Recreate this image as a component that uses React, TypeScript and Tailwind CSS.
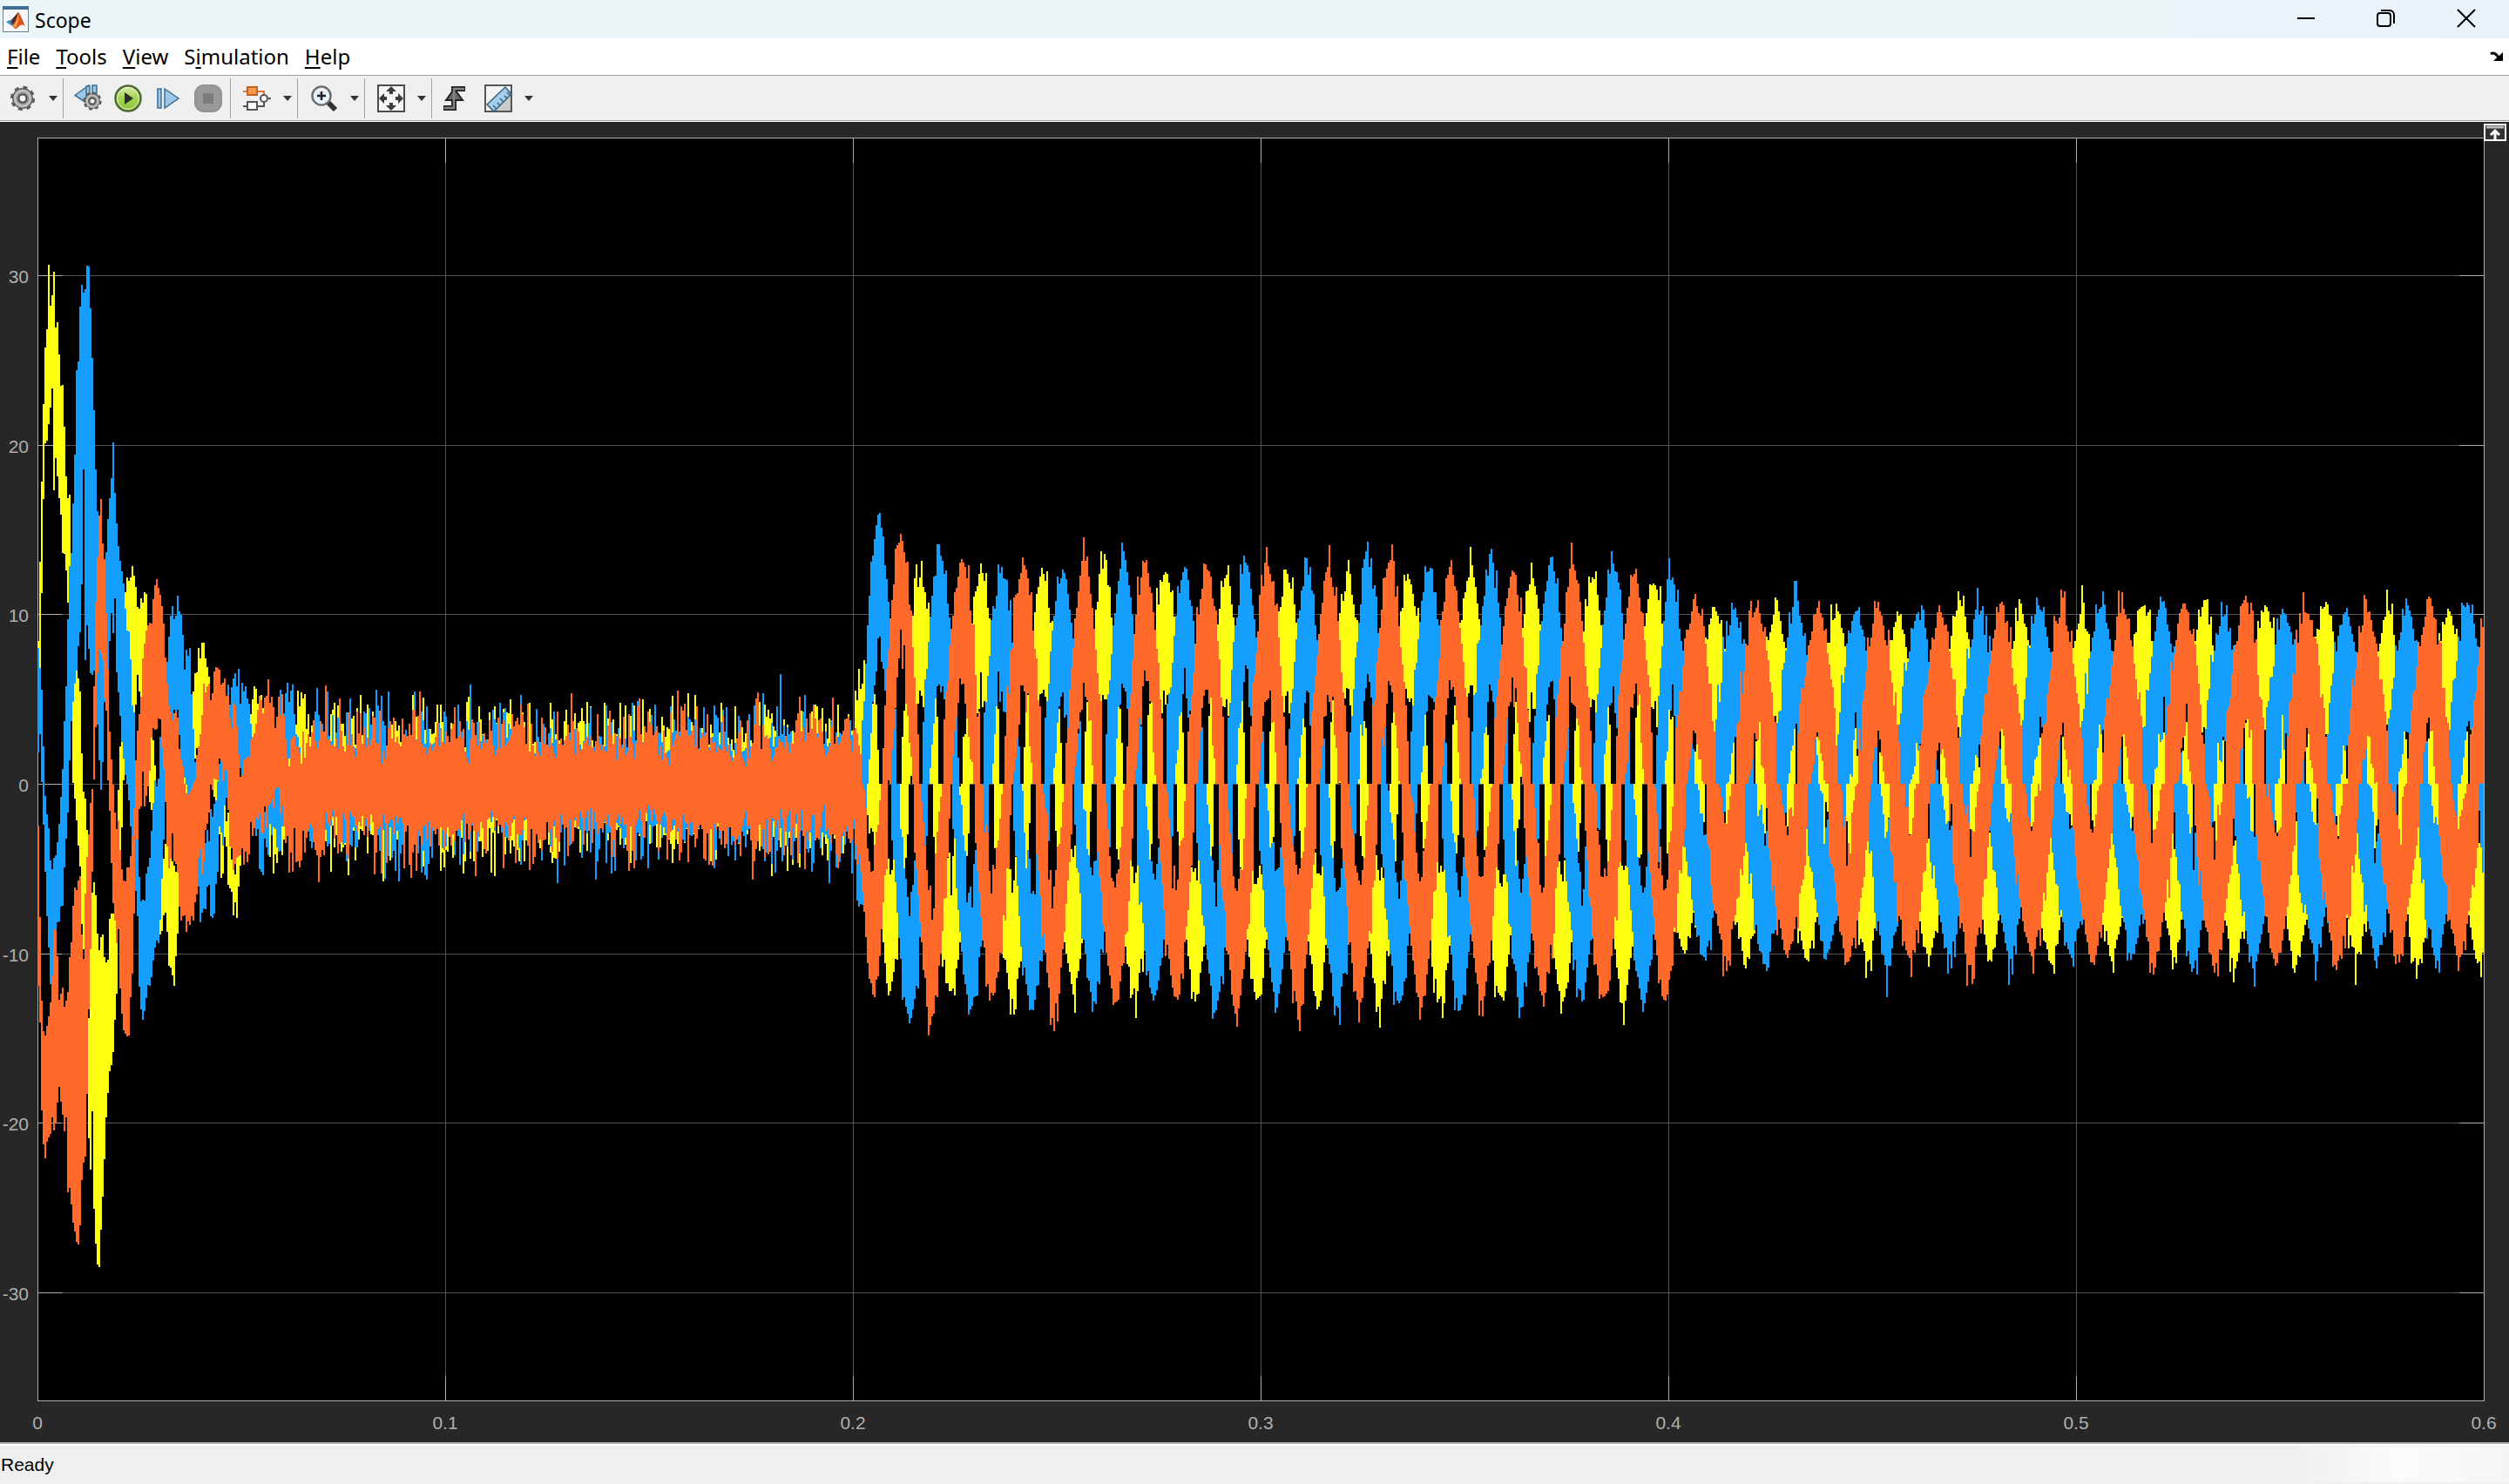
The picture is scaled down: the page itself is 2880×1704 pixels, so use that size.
import type { ReactNode } from 'react';

type Key = [x: number, lo: number, hi: number];

type Trace = {
  name: string;
  color: string;
  seed: number;
  peak: number;
  amp: number;
  boost: number;
  rise: number;
  startup: Key[];
};

// Plot geometry, in viewBox units
const VIEW_W = 2880;
const VIEW_H = 1516;
const LEFT = 43;
const RIGHT = 2851;
const TOP = 19;
const BOTTOM = 1468;
const ZERO = 760;
const UNIT = 19.47;
const PERIOD = 70.15;
const STEP = 2;

const X_TICKS = [0, 0.1, 0.2, 0.3, 0.4, 0.5, 0.6];
const Y_TICKS = [30, 20, 10, 0, -10, -20, -30];

// Envelope of each phase current while the machine starts up
const TRACES: Trace[] = [
  {
    name: 'Phase A',
    color: '#ffff12',
    seed: 11,
    peak: 1197,
    amp: 8.7,
    boost: 0,
    rise: 40,
    startup: [
      [43, 5, 6], [46, 6, 13], [49, 14, 20], [51, 20, 25], [54, 20, 27], [56, 21, 30.2], [57, 22, 28],
      [60, 23, 28.5], [62, 17, 30.2], [64, 19, 27.3], [67, 17.5, 26.5], [69, 17, 23.7], [72, 13.5, 23.4],
      [75, 13, 19.4], [77, 12, 17], [80, 7, 17], [82, 3.7, 12], [84, 0, 10], [87, -2, 8], [92, -5, 5.7],
      [95, -10, 0], [97, -10, 0], [100, -14, -3], [102, -21, -14], [105, -23, -6], [108, -25, -6],
      [110, -27, -7], [113, -29.3, -9.5], [115, -27, -9.5], [118, -24, -8.5], [121, -21, -10.5],
      [123, -18.5, -11], [127, -16.5, -7.5], [130, -15.5, -8], [133, -13, -8], [135, -11, -3],
      [137, -4, 1.5], [139, -3.5, 3], [141, -1, 2], [144, 3, 11.5], [147, 5, 12.3], [150, 5, 12],
      [153, 4, 13], [155, 3.5, 12.3], [158, 6, 10.5], [162, 4.5, 11], [165, 6, 11], [167, 4, 12],
      [169, 3, 9.5], [172, -1, 7], [175, -1.5, 3], [177, -2.5, 2], [182, -8, -2], [185, -9.5, -5],
      [188, -8, -4], [192, -10.5, -3], [195, -10.5, -3.5], [200, -11.8, -5], [203, -10, -5],
      [205, -7, -2], [208, -1, 1], [213, -2, 1], [218, -0.5, 3], [222, 2, 6], [228, 1.5, 7.5],
      [232, 3, 9], [235, 3, 7.5], [241, 2, 5], [247, -2, 2], [251, -5, 1], [258, -4, -2], [262, -5.5, -1.5],
      [267, -7, -4], [271, -9, -5], [273, -6, -3], [280, -1, 1], [288, 2, 4.5], [295, 2, 5.7],
      [302, 1, 4.5], [310, -4.5, 2], [320, -4.5, 1], [328, -3, 2], [340, 1, 4.5], [348, 1, 4.8], [362, -4, 2.5],
    ],
  },
  {
    name: 'Phase B',
    color: '#149fff',
    seed: 23,
    peak: 1149.5,
    amp: 9.2,
    boost: 4.2,
    rise: 14,
    startup: [
      [43, 2, 9], [47, 1, 5.7], [49, 0, 4.5], [51, -4, 0], [53, -7, -1], [56, -10, -3], [59, -12.3, -5],
      [61, -11, -5.3], [63, -10, -4], [67, -9.5, -3], [69, -7, -1], [72, -6.8, 0.6], [74, -4.5, 4],
      [77, -2.5, 7], [79, 0, 12], [82, 4, 14], [85, 5, 17.5], [88, 7, 24], [91, 9, 26], [93, 8.7, 29.5],
      [96, 19, 29.3], [98, 7.3, 29.5], [101, 10, 31], [103, 6, 30], [105, 6.5, 26.5], [107, 7, 23.5],
      [110, 7, 18.5], [113, 2, 15.5], [115, 0, 13], [117, 0, 12], [121, 6, 13], [124, 6, 15.3],
      [127, 10, 17.5], [130, 9, 20], [131, 9, 18], [133, 8, 16.5], [136, 5, 14.3], [138, 4, 12.8],
      [142, 1.5, 11.8], [145, 0, 9.5], [148, -1, 9.4], [152, -3.5, 5], [154, -2, 4], [157, -8, -1],
      [160, -12, -5.5], [162, -13.5, -7], [166, -13.5, -6.5], [168, -12.5, -5], [172, -12, -4],
      [175, -11, -2], [178, -9.5, 0], [182, -9.5, 0], [185, -7, 4], [190, -1, 5], [193, 2, 8.5],
      [197, 4, 10.5], [200, 4.5, 9.7], [204, 4, 11], [208, 1, 10], [212, 0, 7], [218, 0, 8.5],
      [221, -1, 5], [225, -3, 1], [228, -7, -2], [232, -8, -4], [238, -7, -3], [243, -7, -1.5],
      [247, -7.5, 0], [250, -5, 0], [255, -3.5, 1], [262, 0, 5], [268, 2, 6.7], [277, 0, 5.6],
      [283, 0, 5.5], [290, -1, 2], [297, -5, -1], [303, -4.5, -1], [313, -3.5, 0], [322, -3, 4.6],
      [328, 1, 4.5], [334, 1, 6.2], [342, -2, 3], [353, -3, 0], [362, -3, 3],
    ],
  },
  {
    name: 'Phase C',
    color: '#ff6929',
    seed: 37,
    peak: 1174.5,
    amp: 9.1,
    boost: 4,
    rise: 32,
    startup: [
      [43, -10, 0], [46, -14.5, -8], [48, -19, -13], [51, -22, -15.5], [53, -21.5, -14.5], [57, -20.5, -13.5],
      [60, -20, -11], [62, -20.5, -9], [65, -19.5, -9], [68, -18, -12.5], [72, -19.5, -12],
      [75, -21.5, -13.5], [78, -24, -12], [82, -24.5, -9], [85, -26, -6], [88, -27, -6], [91, -27, -5],
      [93, -25, -5], [95, -22, -12], [99, -22, -5], [101, -15, -4], [104, -10, -1], [106, -5, 0],
      [108, -2, 6], [110, 3, 11], [113, 8, 15], [116, 8, 17], [118, 7, 14], [121, 4, 13], [123, 1, 8],
      [126, -2, 3], [129, -6, 0.5], [132, -8, -2], [136, -10.5, -2.5], [139, -13, -4], [142, -14.7, -6],
      [148, -14.5, -5], [152, -11, -3], [154, -8, -1], [157, -3.5, 2.5], [161, -1, 4.5], [165, -2, 8],
      [168, -1, 9], [172, 1, 9.3], [175, 3, 10], [180, 3, 12.3], [183, 4, 11], [187, 2, 10],
      [190, -1, 7.5], [193, -4.5, 5], [198, -5, 4], [203, -5, 4.5], [208, -8, 1], [213, -8, 0],
      [217, -9.3, -1], [222, -8, 0], [227, -5, 1], [233, -4.5, 5.5], [242, -1.5, 5], [247, 0, 7],
      [251, 1, 6], [257, 0, 6], [263, -3, 4.5], [270, -5, 4], [275, -4, 1], [285, -5, 1], [293, -2, 4],
      [307, -2, 5.5], [317, 0, 4], [323, -2, 5], [330, -4, 2], [337, -5, 2], [347, -4, 2], [362, -2, 4],
    ],
  },
];

const xOf = (t: number) => LEFT + t * 4680;
const yOf = (v: number) => ZERO - v * UNIT;

function random(seed: number) {
  let s = seed;
  return () => {
    s = (s + 0x6d2b79f5) | 0;
    let t = Math.imul(s ^ (s >>> 15), 1 | s);
    t = (t + Math.imul(t ^ (t >>> 7), 61 | t)) ^ t;
    return ((t ^ (t >>> 14)) >>> 0) / 4294967296;
  };
}

const clamp01 = (v: number) => Math.max(0, Math.min(1, v));

function startupBand(keys: Key[], x: number) {
  let i = 1;
  while (i < keys.length - 1 && keys[i][0] < x) i++;
  const [x0, lo0, hi0] = keys[i - 1];
  const [x1, lo1, hi1] = keys[i];
  const k = clamp01((x - x0) / (x1 - x0));
  return [lo0 + (lo1 - lo0) * k, hi0 + (hi1 - hi0) * k];
}

function tracePath({ startup, seed, peak, amp, boost, rise }: Trace) {
  const rnd = random(seed);
  const ripple = () => Math.pow(rnd(), 2.2);
  let d = '';
  // slow drift of the upper and lower ripple
  let up = 0.5;
  let down = 0.5;
  let cycle = 0;
  let swing = 0;

  for (let x = LEFT + 1; x <= RIGHT; x += STEP) {
    let lo: number;
    let hi: number;
    up = up * 0.65 + rnd() * 0.35;
    down = down * 0.65 + rnd() * 0.35;

    if (x < 360) {
      [lo, hi] = startupBand(startup, x);
      const jitter = x > 215 ? 2 : 0.9;
      lo += (rnd() - 0.5) * jitter;
      hi += (rnd() - 0.5) * jitter;
      if (rnd() < 0.08) lo += (hi - lo) * 0.25;
    } else if (x < 984) {
      // no load: only switching ripple around zero
      hi = 0.5 + 3.5 * up + 2.8 * Math.pow(rnd(), 3);
      lo = -0.5 - 3.5 * down - 2.8 * Math.pow(rnd(), 3);
      if (rnd() < 0.03) hi += 1.2;
      if (rnd() < 0.03) lo -= 1;
    } else {
      const ramp = clamp01((x - 978) / rise);
      const relax = clamp01((x - 1914) / 14);
      const start = boost * Math.exp(-(x - 984) / 45);
      const angle = (2 * Math.PI * (x - peak)) / PERIOD;
      const half = Math.round(angle / Math.PI);
      if (half !== cycle) {
        cycle = half;
        swing = (rnd() - 0.5) * 0.9;
      }
      const a = (amp + start) * (1 - relax) + 6.7 * relax + swing;
      const tip = Math.abs(Math.cos(angle));
      const side = Math.abs(Math.sin(angle));
      const c = a * ramp * Math.cos(angle);
      const wOut = 2.1 + 0.9 * Math.pow(tip, 10) + 1.9 * side * side * ramp;
      const wIn = 3 + 2.1 * side * ramp + 0.4 * relax;
      const outer = wOut + 1.3 * up + 1.7 * Math.pow(rnd(), 4);
      const inner = wIn + 2 * (down - 0.5) + 1.2 * ripple() - (rnd() < 0.15 ? 1.8 * rnd() : 0);
      hi = c + (c > 0 ? outer : inner);
      lo = c - (c > 0 ? inner : outer);
      // the ripple never pulls a phase through zero before it commutates
      const limit = 2.8 + relax * (0.6 + 1.2 * (rnd() - 0.5));
      if (c > limit) lo = Math.max(lo, 0);
      if (c < -limit) hi = Math.min(hi, 0);
    }
    d += `M${x} ${yOf(hi).toFixed(0)}V${yOf(lo).toFixed(0)}`;
  }
  return d;
}

const PATHS = TRACES.map((trace) => ({ ...trace, d: tracePath(trace) }));

function ScopePlot() {
  return (
    <svg
      viewBox={`0 0 ${VIEW_W} ${VIEW_H}`}
      className="block h-auto w-full font-['Liberation_Sans',Arial,sans-serif]"
      role="img"
      aria-label="Scope plot"
    >
      <rect x={LEFT} y={TOP} width={RIGHT - LEFT} height={BOTTOM - TOP} fill="#000" />

      {/* Grid */}
      <g shapeRendering="crispEdges" fill="none">
        <path
          stroke="#555"
          d={
            X_TICKS.slice(1, -1).map((t) => `M${xOf(t) + 0.5} ${TOP}V${BOTTOM}`).join('') +
            Y_TICKS.map((v) => `M${LEFT} ${Math.round(yOf(v)) + 0.5}H${RIGHT}`).join('')
          }
        />
        <path
          stroke="#afafaf"
          d={
            X_TICKS.slice(1, -1)
              .map((t) => `M${xOf(t) + 0.5} ${TOP}v28M${xOf(t) + 0.5} ${BOTTOM}v-28`)
              .join('') +
            Y_TICKS.map((v) => {
              const y = Math.round(yOf(v)) + 0.5;
              return `M${LEFT} ${y}h28M${RIGHT} ${y}h-28`;
            }).join('')
          }
        />
        <rect x={LEFT + 0.5} y={TOP - 0.5} width={RIGHT - LEFT} height={BOTTOM - TOP + 1} stroke="#afafaf" />
      </g>

      {/* Signals */}
      <g shapeRendering="crispEdges" fill="none" strokeWidth={STEP}>
        {PATHS.map(({ name, color, d }) => (
          <path key={name} stroke={color} d={d} />
        ))}
      </g>

      {/* Axis labels */}
      <g fill="#afafaf" fontSize="21">
        {Y_TICKS.map((v) => (
          <text key={v} x="33" y={yOf(v) + 9} textAnchor="end">
            {v}
          </text>
        ))}
        {X_TICKS.map((t) => (
          <text key={t} x={xOf(t)} y="1501" textAnchor="middle">
            {t}
          </text>
        ))}
      </g>
    </svg>
  );
}

function ToolButton({ label, children }: { label: string; children: ReactNode }) {
  return (
    <button type="button" aria-label={label} className="size-8 shrink-0">
      <svg viewBox="0 0 32 32" className="size-8" fill="none">
        {children}
      </svg>
    </button>
  );
}

function Caret({ label }: { label: string }) {
  return (
    <button type="button" aria-label={label} className="ml-2 flex h-8 w-[22px] shrink-0 items-center justify-center">
      <svg viewBox="0 0 10 6" className="h-[6px] w-[10px]">
        <path d="M0 0h10L5 6z" fill="#333" />
      </svg>
    </button>
  );
}

function Separator() {
  return <div className="h-[46px] w-px shrink-0 bg-[#a3a3a3]" />;
}

// Cog outline centred on (cx, cy)
function Cog({ cx, cy, r }: { cx: number; cy: number; r: number }) {
  return (
    <g>
      <circle cx={cx} cy={cy} r={r * 0.9} stroke="#5c5c5c" strokeWidth={r * 0.22} strokeDasharray={`${r * 0.36} ${r * 0.347}`} />
      <circle cx={cx} cy={cy} r={r * 0.64} fill="#b5b5b5" stroke="#5c5c5c" strokeWidth={r * 0.42} />
      <circle cx={cx} cy={cy} r={r * 0.62} stroke="#bdbdbd" strokeWidth={r * 0.26} />
      <circle cx={cx} cy={cy} r={r * 0.32} fill="#f4f4f4" stroke="#4f4f4f" strokeWidth={r * 0.15} />
    </g>
  );
}

function Toolbar() {
  return (
    <div className="flex h-[53px] items-center border-y border-[#9c9c9c] bg-[#efefef] pl-[10px]" role="toolbar" aria-label="Scope">
      <ToolButton label="Configuration properties">
        <Cog cx={16} cy={16} r={14} />
      </ToolButton>
      <Caret label="More properties" />
      <Separator />

      <div className="flex gap-[14px] pr-[9px] pl-3">
        <ToolButton label="Step back options">
          <path d="M1 12.500L17 1v22z" fill="#9cc8e6" stroke="#3c6c94" strokeWidth="1.500" />
          <path d="M14 2h4v12h-4zM21 1h5v14h-5z" fill="#9cc8e6" stroke="#3c6c94" strokeWidth="1.500" />
          <Cog cx={21} cy={19} r={10.5} />
        </ToolButton>
        <ToolButton label="Run">
          <defs>
            <linearGradient id="run" x1="0" y1="0" x2="0" y2="1">
              <stop offset="0" stopColor="#d9efb0" />
              <stop offset="0.5" stopColor="#a3d34c" />
              <stop offset="1" stopColor="#8cc63f" />
            </linearGradient>
          </defs>
          <circle cx="16" cy="16" r="14.500" fill="url(#run)" stroke="#4f6b32" strokeWidth="2.500" />
          <circle cx="16" cy="16" r="12.500" stroke="#eaf7cf" strokeWidth="1" />
          <path d="M12 9l10 7-10 7z" fill="#2e2e2e" />
        </ToolButton>
        <ToolButton label="Step forward">
          <path d="M4 5h4v22H4z" fill="#9cc8e6" stroke="#3c6c94" strokeWidth="1.500" />
          <path d="M12 5l16 11-16 11z" fill="#9cc8e6" stroke="#3c6c94" strokeWidth="1.500" />
        </ToolButton>
        <ToolButton label="Stop">
          <rect width="32" height="32" rx="11" fill="#999" />
          <rect x="1" y="1" width="30" height="30" rx="10" stroke="#8d8d8d" />
          <rect x="10" y="10" width="12" height="12" fill="#7c7c7c" />
        </ToolButton>
      </div>
      <Separator />

      <div className="flex pl-[14px]">
        <ToolButton label="Highlight Simulink block">
          <path d="M0 8h5M17 8h7v7M0 25h5M16 25h8v-6M28 16h4" stroke="#555" strokeWidth="2" />
          <path d="M0 8h5M16 8h8v6" stroke="#e2762e" strokeWidth="2" />
          <rect x="5" y="3" width="11" height="9" fill="#f5994a" stroke="#c9601b" strokeWidth="2" />
          <rect x="5" y="20" width="11" height="9" fill="#fff" stroke="#555" strokeWidth="2" />
          <circle cx="24" cy="16" r="4" fill="#fff" stroke="#555" strokeWidth="2" />
        </ToolButton>
        <Caret label="More block options" />
      </div>
      <Separator />

      <div className="flex pl-[14px]">
        <ToolButton label="Zoom">
          <path d="M20 20l9 9" stroke="#333" strokeWidth="6" />
          <circle cx="13" cy="13" r="10.500" fill="#fff" stroke="#6e6e6e" strokeWidth="2.500" />
          <circle cx="13" cy="13" r="8.500" fill="#e4f0f8" />
          <path d="M13 8v10M8 13h10" stroke="#222" strokeWidth="2.500" />
        </ToolButton>
        <Caret label="More zoom options" />
      </div>
      <Separator />

      <div className="flex pl-[14px]">
        <ToolButton label="Scale axes">
          <rect x="1" y="1" width="30" height="30" fill="#f6f6f6" stroke="#4a4a4a" strokeWidth="2" />
          <path
            d="M16 2l6 6h-4v3h-4V8h-4zM16 30l6-6h-4v-3h-4v3h-4zM2 16l6-6v4h3v4H8v4zM30 16l-6-6v4h-3v4h3v4z"
            fill="#3b3b3b"
          />
        </ToolButton>
        <Caret label="More scaling options" />
      </div>
      <Separator />

      <div className="flex pl-3">
        <ToolButton label="Triggers">
          <path d="M1 27h12V5h13" stroke="#222" strokeWidth="6" />
          <path d="M13.500 5L23 18H4z" fill="#6a6a6a" stroke="#222" strokeWidth="2" />
          <path d="M2 27h11V5h12" stroke="#858585" strokeWidth="2.500" />
        </ToolButton>
      </div>
      <div className="flex pl-4">
        <ToolButton label="Measurements">
          <path d="M1 1h30v30H1z" fill="#f3f3f3" stroke="#555" strokeWidth="2" />
          <path d="M30 12v18H12z" fill="#c9c9c9" />
          <path d="M3 23L24 3l7 8-20 20z" fill="#a3cfe8" stroke="#35617f" strokeWidth="1.500" />
          <path d="M14 28l-4-4M18 24l-3-3M22 20l-4-4M26 16l-3-3M29 12l-3-3" stroke="#35617f" strokeWidth="1.500" />
        </ToolButton>
        <Caret label="More measurements" />
      </div>
    </div>
  );
}

function TitleBar() {
  return (
    <header className="flex h-11 items-center bg-gradient-to-r from-[#ebf4f7] from-85% to-[#e8f2fb] pl-[3px]">
      <svg viewBox="0 0 30 30" className="size-[30px]" aria-hidden="true">
        <rect x="0.500" y="0.500" width="29" height="29" fill="#f4f6f9" stroke="#6f7f92" />
        <path d="M0 0h30v4H0z" fill="#3f6f96" />
        <path d="M4 18l7-3 7-8-2 10-5 6z" fill="#3f86b8" />
        <path d="M11 15l7-8-1 13-3 3-4-4z" fill="#5a2433" />
        <path d="M18 7c3 3 5 10 8 16-4-3-6-1-8 1-2 2-3 2-4 2l-3-4c3-1 5-9 7-15z" fill="#d9541e" />
        <path d="M18 8c1 4 1 10-3 17l-3-3c3-2 5-8 6-14z" fill="#f2a33a" />
      </svg>
      <h1 className="ml-[7px] pt-[2px] text-[23px] leading-[30px]">Scope</h1>

      <div className="ml-auto flex gap-[60px] pr-[33px]">
        <button type="button" aria-label="Minimize" className="mb-1 size-8">
          <svg viewBox="0 0 32 32" className="size-8" fill="none" stroke="#000" strokeWidth="2">
            <path d="M6 17h20" />
          </svg>
        </button>
        <button type="button" aria-label="Restore" className="mb-1 size-8">
          <svg viewBox="0 0 32 32" className="size-8" fill="none" stroke="#000" strokeWidth="2">
            <rect x="6" y="11" width="15" height="15" rx="3" />
            <path d="M10 8h10a5 5 0 0 1 5 5v10" />
          </svg>
        </button>
        <button type="button" aria-label="Close" className="mb-1 size-8">
          <svg viewBox="0 0 32 32" className="size-8" fill="none" stroke="#000" strokeWidth="2">
            <path d="M6 7l20 20M26 7L6 27" />
          </svg>
        </button>
      </div>
    </header>
  );
}

function MenuItem({ first, mid, rest }: { first?: string; mid: string; rest: string }) {
  return (
    <button type="button">
      {first}
      <span className="underline decoration-black decoration-2 underline-offset-3">{mid}</span>
      {rest}
    </button>
  );
}

function MenuBar() {
  return (
    <nav className="flex h-[42px] items-center gap-[18px] bg-white pr-[6px] pl-2 text-[24px] leading-8">
      <MenuItem mid="F" rest="ile" />
      <MenuItem mid="T" rest="ools" />
      <MenuItem mid="V" rest="iew" />
      <MenuItem first="S" mid="i" rest="mulation" />
      <MenuItem mid="H" rest="elp" />
      <button type="button" aria-label="Dock window" className="ml-auto">
        <svg viewBox="0 0 16 12" className="h-3 w-4" fill="none">
          <path d="M1 3c3-2 6-1 9 4" stroke="#000" strokeWidth="3" />
          <path d="M15 1v10H4z" fill="#000" />
        </svg>
      </button>
    </nav>
  );
}

export default function App() {
  return (
    <div className="min-h-screen bg-[#efefef] font-['Noto_Sans','Open_Sans',sans-serif] text-black">
      <TitleBar />
      <MenuBar />
      <Toolbar />

      <main className="relative border-t border-b-2 border-t-white border-b-[#ababab] bg-[#272727]">
        <ScopePlot />
        <button type="button" aria-label="Maximize axes" className="absolute top-[2px] right-[3px]">
          <svg viewBox="0 0 26 20" className="h-5 w-[26px]" fill="none">
            <rect x="1" y="1" width="24" height="18" fill="#333" stroke="#fff" strokeWidth="2" />
            <path d="M3 4h20" stroke="#bbb" strokeWidth="3" />
            <path d="M13 19V8M8 13l5-5 5 5" stroke="#fff" strokeWidth="3" />
          </svg>
        </button>
      </main>

      <footer className="flex h-11 items-center justify-between border-t-2 border-white pt-px pl-[1px] font-['Liberation_Sans',Arial,sans-serif] text-[21px] leading-6">
        <span>Ready</span>
        <div className="h-full w-[250px] bg-gradient-to-r from-[#efefef] via-[#fbfbfb] to-[#f5f5f5]" />
      </footer>
    </div>
  );
}
